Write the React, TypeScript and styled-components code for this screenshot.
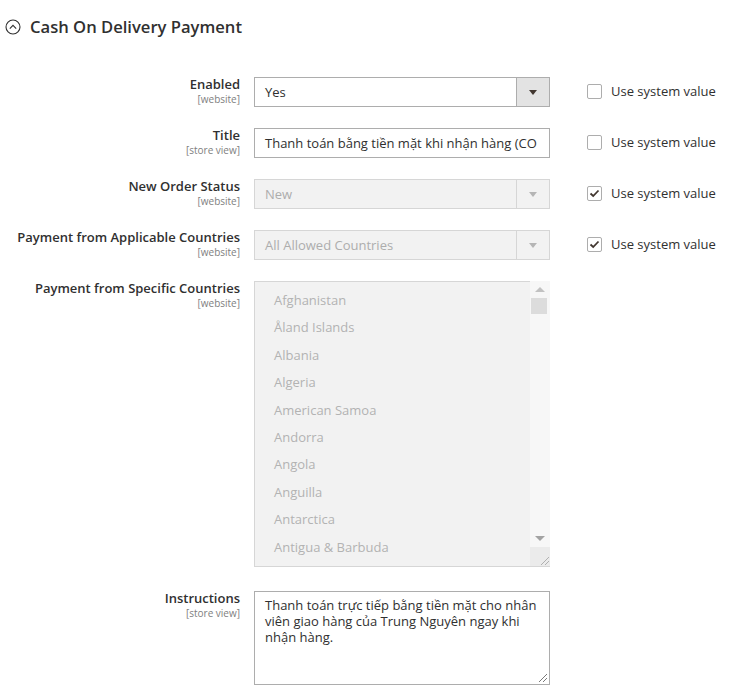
import React from "react";
import styled, { createGlobalStyle } from "styled-components";

const Global = createGlobalStyle`
  html, body { margin: 0; padding: 0; background: #fff; }
  body { font-family: "Open Sans", "Noto Sans", sans-serif; color: #303030; }
  * { box-sizing: border-box; }
`;

const Page = styled.div`
  width: 746px;
  height: 693px;
  overflow: hidden;
  background: #fff;
`;

const Header = styled.div`
  display: flex;
  align-items: center;
  gap: 9px;
  padding: 17px 0 0 5px;
  height: 37px;
`;

const HeaderTitle = styled.h2`
  margin: 0;
  font-size: 16.6px;
  font-weight: 600;
  color: #303030;
  line-height: 20px;
`;

const Form = styled.div`
  display: flex;
  flex-direction: column;
  padding-top: 40px;
`;

const Row = styled.div<{ $gap?: number }>`
  display: grid;
  grid-template-columns: 240px 296px 1fr;
  column-gap: 14px;
  margin-bottom: ${(p) => (p.$gap ?? 21)}px;
`;

const LabelCell = styled.div`
  text-align: right;
  display: flex;
  flex-direction: column;
  align-items: flex-end;
  margin-top: -2px;
`;

const LabelText = styled.div`
  font-size: 13px;
  font-weight: 600;
  line-height: 18px;
  color: #303030;
`;

const Scope = styled.div`
  font-size: 10px;
  line-height: 13px;
  color: #808080;
`;

const SelectBox = styled.div<{ $disabled?: boolean }>`
  display: flex;
  height: 30px;
  border: 1px solid ${(p) => (p.$disabled ? "#d6d6d6" : "#adadad")};
  background: ${(p) => (p.$disabled ? "#f2f2f2" : "#fff")};
`;

const SelectValue = styled.div<{ $disabled?: boolean }>`
  flex: 1;
  padding-left: 10px;
  font-size: 13px;
  line-height: 28px;
  color: ${(p) => (p.$disabled ? "#adadad" : "#303030")};
`;

const SelectArrow = styled.div<{ $disabled?: boolean }>`
  width: 33px;
  display: flex;
  align-items: center;
  justify-content: center;
  border-left: 1px solid ${(p) => (p.$disabled ? "#d6d6d6" : "#adadad")};
  background: ${(p) => (p.$disabled ? "#f2f2f2" : "#e3e3e3")};
  &::after {
    content: "";
    border-left: 4px solid transparent;
    border-right: 4px solid transparent;
    border-top: 5px solid ${(p) => (p.$disabled ? "#b5b5b5" : "#41362f")};
  }
`;

const TextInput = styled.div`
  height: 30px;
  border: 1px solid #adadad;
  background: #fff;
  padding: 0 10px;
  font-size: 13px;
  line-height: 28px;
  color: #303030;
  white-space: nowrap;
`;

const SysCell = styled.div`
  padding-left: 23px;
  display: flex;
  align-items: flex-start;
  padding-top: 7px;
  gap: 9px;
`;

const CheckBox = styled.span`
  width: 15px;
  height: 15px;
  border: 1px solid #adadad;
  border-radius: 2px;
  background: #fff;
  display: flex;
  align-items: center;
  justify-content: center;
  flex: none;
`;

const SysLabel = styled.span`
  font-size: 13px;
  line-height: 15px;
  color: #303030;
`;

const MultiSelect = styled.div`
  height: 286px;
  display: flex;
  background: #f2f2f2;
  border-bottom: 1px solid #d6d6d6;
`;

const OptionList = styled.div`
  flex: 1;
  border-left: 1px solid #d6d6d6;
  border-top: 1px solid #d6d6d6;
  padding: 5px 0 0 19px;
  overflow: hidden;
`;

const OptionItem = styled.div`
  height: 27.4px;
  line-height: 27.4px;
  font-size: 13px;
  color: #b3b3b3;
  white-space: nowrap;
`;

const ScrollTrack = styled.div`
  width: 20px;
  display: flex;
  flex-direction: column;
  align-items: center;
  background: #f7f7f7;
`;

const ScrollArrow = styled.div<{ $dir: "up" | "down" }>`
  height: 17px;
  width: 18px;
  display: flex;
  align-items: center;
  justify-content: center;
  &::after {
    content: "";
    border-left: 5px solid transparent;
    border-right: 5px solid transparent;
    ${(p) =>
      p.$dir === "up"
        ? "border-bottom: 5px solid #c2c2c2;"
        : "border-top: 5px solid #a3a3a3;"}
  }
`;

const ScrollThumb = styled.div`
  width: 16px;
  height: 16px;
  background: #dcdcdc;
  margin-left: -2px;
`;

const ScrollSpacer = styled.div`
  flex: 1;
`;

const ScrollCorner = styled.div`
  width: 20px;
  height: 19px;
  background: #ebebeb;
  display: flex;
  align-items: flex-end;
  justify-content: flex-end;
`;

const TextArea = styled.div`
  height: 94px;
  border: 1px solid #adadad;
  background: #fff;
  padding: 5px 10px;
  font-size: 13px;
  line-height: 16px;
  color: #303030;
  position: relative;
`;

const Grip = styled.svg`
  position: absolute;
  right: 1px;
  bottom: 1px;
`;

const CollapseIcon = () => (
  <svg width="16" height="16" viewBox="0 0 16 16">
    <circle cx="8" cy="8" r="7" fill="none" stroke="#303030" strokeWidth="1.1" />
    <path d="M4.8 9.6 L8 6.4 L11.2 9.6" fill="none" stroke="#303030" strokeWidth="1.1" />
  </svg>
);

const Check = () => (
  <svg width="11" height="9" viewBox="0 0 11 9">
    <path d="M1.5 4.5 L4.2 7 L9.5 1.5" fill="none" stroke="#41362f" strokeWidth="1.8" />
  </svg>
);

const GripLines = ({ color }: { color: string }) => (
  <svg width="11" height="11" viewBox="0 0 11 11">
    <path d="M10 2 L2 10 M10 6 L6 10" stroke={color} strokeWidth="1" />
  </svg>
);

const SystemValue = ({ checked }: { checked?: boolean }) => (
  <SysCell>
    <CheckBox>{checked && <Check />}</CheckBox>
    <SysLabel>Use system value</SysLabel>
  </SysCell>
);

const Label = ({ text, scope }: { text: string; scope: string }) => (
  <LabelCell>
    <LabelText>{text}</LabelText>
    <Scope>{scope}</Scope>
  </LabelCell>
);

const countries = [
  "Afghanistan",
  "Åland Islands",
  "Albania",
  "Algeria",
  "American Samoa",
  "Andorra",
  "Angola",
  "Anguilla",
  "Antarctica",
  "Antigua & Barbuda",
];

export default function App() {
  return (
    <Page>
      <Global />
      <Header>
        <CollapseIcon />
        <HeaderTitle>Cash On Delivery Payment</HeaderTitle>
      </Header>
      <Form>
        <Row>
          <Label text="Enabled" scope="[website]" />
          <SelectBox>
            <SelectValue>Yes</SelectValue>
            <SelectArrow />
          </SelectBox>
          <SystemValue />
        </Row>
        <Row>
          <Label text="Title" scope="[store view]" />
          <TextInput>Thanh toán bằng tiền mặt khi nhận hàng (CO</TextInput>
          <SystemValue />
        </Row>
        <Row>
          <Label text="New Order Status" scope="[website]" />
          <SelectBox $disabled>
            <SelectValue $disabled>New</SelectValue>
            <SelectArrow $disabled />
          </SelectBox>
          <SystemValue checked />
        </Row>
        <Row>
          <Label text="Payment from Applicable Countries" scope="[website]" />
          <SelectBox $disabled>
            <SelectValue $disabled>All Allowed Countries</SelectValue>
            <SelectArrow $disabled />
          </SelectBox>
          <SystemValue checked />
        </Row>
        <Row $gap={24}>
          <Label text="Payment from Specific Countries" scope="[website]" />
          <MultiSelect>
            <OptionList>
              {countries.map((c) => (
                <OptionItem key={c}>{c}</OptionItem>
              ))}
            </OptionList>
            <ScrollTrack>
              <ScrollArrow $dir="up" />
              <ScrollThumb />
              <ScrollSpacer />
              <ScrollArrow $dir="down" />
              <ScrollCorner>
                <GripLines color="#b0b0b0" />
              </ScrollCorner>
            </ScrollTrack>
          </MultiSelect>
          <div />
        </Row>
        <Row>
          <Label text="Instructions" scope="[store view]" />
          <TextArea>
            Thanh toán trực tiếp bằng tiền mặt cho nhân viên giao hàng của Trung Nguyên ngay khi nhận hàng.
            <Grip width="11" height="11" viewBox="0 0 11 11">
              <path d="M10 2 L2 10 M10 6 L6 10" stroke="#7a7a7a" strokeWidth="1" />
            </Grip>
          </TextArea>
          <div />
        </Row>
      </Form>
    </Page>
  );
}
